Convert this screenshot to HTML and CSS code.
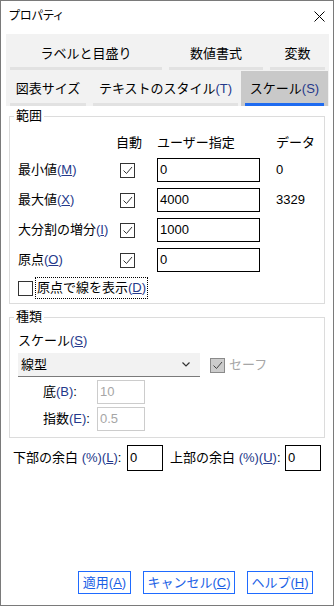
FILE: index.html
```html
<!DOCTYPE html>
<html lang="ja">
<head>
    <meta charset="UTF-8">
    <meta name="viewport" content="width=device-width, initial-scale=1.0">
    <title>プロパティ</title>
    <link rel="stylesheet" href="styles.css">
</head>
<body>

    <div class="window">
        <!-- タイトルバー -->
        <div class="titlebar">
            <span class="title">プロパティ</span>
            <svg class="close" width="11" height="11" viewBox="0 0 11 11">
                <path d="M0.5 0.5 L10.5 10.5 M10.5 0.5 L0.5 10.5" stroke="#000" stroke-width="1"/>
            </svg>
        </div>

        <!-- タブ -->
        <div class="tabs">
            <div class="tab-row row1">
                <div class="tab t-label"><span class="tab-text">ラベルと目盛り</span></div>
                <div class="tab t-num"><span class="tab-text">数値書式</span></div>
                <div class="tab t-var"><span class="tab-text">変数</span></div>
            </div>
            <div class="tab-row row2">
                <div class="tab t-size"><span class="tab-text">図表サイズ</span></div>
                <div class="tab t-style"><span class="tab-text">テキストのスタイル<span class="mn">(T)</span></span></div>
                <div class="tab t-scale active"><span class="tab-text">スケール<span class="mn">(S)</span></span></div>
            </div>
        </div>

        <div class="content">
            <fieldset class="group group-range">
                <legend>範囲</legend>
                <div class="range-grid">
                    <span></span>
                    <span class="head">自動</span>
                    <span class="head">ユーザー指定</span>
                    <span class="head data">データ</span>

                    <span class="row-label">最小値<span class="mn">(<u>M</u>)</span></span>
                    <span class="cb-cell"><span class="cb checked"><svg width="13" height="13" viewBox="0 0 13 13"><polyline points="2.5,6.5 5.5,9.5 11,3" fill="none" stroke="#333" stroke-width="1"/></svg></span></span>
                    <span class="field">0</span>
                    <span class="data">0</span>

                    <span class="row-label">最大値<span class="mn">(<u>X</u>)</span></span>
                    <span class="cb-cell"><span class="cb checked"><svg width="13" height="13" viewBox="0 0 13 13"><polyline points="2.5,6.5 5.5,9.5 11,3" fill="none" stroke="#333" stroke-width="1"/></svg></span></span>
                    <span class="field">4000</span>
                    <span class="data">3329</span>

                    <span class="row-label">大分割の増分<span class="mn">(<u>I</u>)</span></span>
                    <span class="cb-cell"><span class="cb checked"><svg width="13" height="13" viewBox="0 0 13 13"><polyline points="2.5,6.5 5.5,9.5 11,3" fill="none" stroke="#333" stroke-width="1"/></svg></span></span>
                    <span class="field">1000</span>
                    <span class="data"></span>

                    <span class="row-label">原点<span class="mn">(<u>O</u>)</span></span>
                    <span class="cb-cell"><span class="cb checked"><svg width="13" height="13" viewBox="0 0 13 13"><polyline points="2.5,6.5 5.5,9.5 11,3" fill="none" stroke="#333" stroke-width="1"/></svg></span></span>
                    <span class="field">0</span>
                    <span class="data"></span>
                </div>
                <div class="check-line">
                    <span class="cb"></span>
                    <span class="focus">原点で線を表示<span class="mn">(<u>D</u>)</span></span>
                </div>
            </fieldset>

            <fieldset class="group group-kind">
                <legend>種類</legend>
                <div class="scale-label">スケール<span class="mn">(<u>S</u>)</span></div>
                <div class="select-line">
                    <div class="select">
                        <span>線型</span>
                        <svg width="8" height="5" viewBox="0 0 8 5"><polyline points="0.5,0.5 4,4 7.5,0.5" fill="none" stroke="#333" stroke-width="1.2"/></svg>
                    </div>
                    <span class="cb disabled"><svg width="13" height="13" viewBox="0 0 13 13"><polyline points="2.5,6.5 5.5,9.5 11,3" fill="none" stroke="#444" stroke-width="1"/></svg></span>
                    <span class="safe-text">セーフ</span>
                </div>
                <div class="param-line">
                    <span class="param-label">底<span class="mn">(B)</span>:</span>
                    <span class="field small">10</span>
                </div>
                <div class="param-line">
                    <span class="param-label">指数<span class="mn">(E)</span>:</span>
                    <span class="field small">0.5</span>
                </div>
            </fieldset>

            <div class="margin-line">
                <span class="margin-label first">下部の余白 <span class="mn">(%)(<u>L</u>)</span>:</span>
                <span class="field tiny">0</span>
                <span class="margin-label second">上部の余白 <span class="mn">(%)(<u>U</u>)</span>:</span>
                <span class="field tiny">0</span>
            </div>

            <div class="buttons">
                <button class="btn b-apply">適用<span class="mn">(<u>A</u>)</span></button>
                <button class="btn b-cancel">キャンセル<span class="mn">(<u>C</u>)</span></button>
                <button class="btn b-help">ヘルプ<span class="mn">(<u>H</u>)</span></button>
            </div>
        </div>
    </div>

</body>
</html>
```

FILE: styles.css
```css
* {
    margin: 0;
    padding: 0;
    box-sizing: border-box;
}

body {
    font-family: "Liberation Sans", "Noto Sans CJK JP", sans-serif;
    font-size: 13px;
    line-height: 18px;
    color: #000;
    background-color: #fff;
}

.window {
    width: 334px;
    height: 606px;
    border: 1px solid #7a7a7a;
    display: flex;
    flex-direction: column;
}

/* タイトルバー */
.titlebar {
    height: 30px;
    display: flex;
    align-items: center;
    justify-content: space-between;
    padding: 0 8px 0 8px;
}

.title {
    font-size: 12px;
    font-feature-settings: "palt";
}

/* タブ */
.tabs {
    margin: 3px 4px 0 5px;
    background-color: #f2f2f2;
}

.tab-row {
    display: flex;
}

.row1 {
    height: 37px;
    padding: 0 3px 0 4px;
    gap: 7px;
}

.row2 {
    height: 35px;
    padding-left: 4px;
}

.tab {
    display: flex;
    flex-direction: column;
}

.tab::after {
    content: "";
    height: 3px;
    background-color: #e2e2e2;
}

.row1 .tab {
    margin-bottom: 1px;
}

.tab-text {
    flex: 1;
    display: flex;
    justify-content: center;
    align-items: center;
    white-space: nowrap;
}

.row1 .tab-text {
    padding-top: 7px;
}

.row2 .tab-text {
    padding-top: 4px;
}

.t-label { width: 152px; }
.t-num { width: 94px; }
.t-var { width: 55px; }
.t-size { width: 76px; margin-right: 7px; }
.t-style { width: 145px; margin-right: 3px; }
.t-scale { width: 87px; }

.tab.active {
    background-color: #c9c9c9;
}

.tab.active::after {
    background-color: #1f6bf0;
    margin: 0 4px;
}

.mn {
    color: #24388a;
}

/* 本体 */
.content {
    flex: 1;
    display: flex;
    flex-direction: column;
    padding: 0 8px 11px 8px;
}

.group {
    border: 1px solid #dcdcdc;
    padding: 0 8px 4px 8px;
}

.group legend {
    margin-left: -4px;
    padding: 0 2px;
    line-height: 18px;
}

.group-range {
    margin-top: 1px;
}

.range-grid {
    display: grid;
    grid-template-columns: 98px 41px 103px 1fr;
    grid-template-rows: 19px repeat(4, 24px);
    row-gap: 6px;
    align-items: center;
    margin-top: 8px;
}

.head {
    color: #000;
}

.data {
    padding-left: 16px;
}

.cb-cell {
    display: flex;
    padding-left: 4px;
}

.cb {
    width: 15px;
    height: 15px;
    border: 1px solid #333;
    background-color: #fff;
    display: inline-flex;
    align-items: center;
    justify-content: center;
}

.field {
    height: 24px;
    border: 1px solid #000;
    padding-left: 2px;
    display: flex;
    align-items: center;
    background-color: #fff;
}

.check-line {
    display: flex;
    align-items: center;
    height: 22px;
    margin-top: 5px;
}

.focus {
    margin-left: 2px;
    height: 22px;
    border: 1px dotted #000;
    padding: 0 1px;
    display: flex;
    align-items: center;
}

/* 種類 */
.group-kind {
    margin-top: 4px;
    padding-bottom: 6px;
}

.scale-label {
    margin-top: 6px;
}

.select-line {
    display: flex;
    align-items: center;
    margin-top: 3px;
}

.select {
    width: 182px;
    height: 24px;
    background-color: #f2f2f2;
    border-bottom: 1px solid #7a7a7a;
    display: flex;
    align-items: center;
    justify-content: space-between;
    padding: 0 10px 0 3px;
}

.cb.disabled {
    margin-left: 10px;
    background-color: #cccccc;
    border-color: #8a8a8a;
}

.safe-text {
    margin-left: 4px;
    color: #a6a6a6;
}

.param-line {
    display: flex;
    align-items: center;
    margin-top: 3px;
    padding-left: 25px;
}

.param-label {
    width: 54px;
}

.field.small {
    width: 48px;
    border-color: #cccccc;
    color: #a6a6a6;
}

/* 余白 */
.margin-line {
    display: flex;
    align-items: center;
    margin-top: 7px;
    padding-left: 4px;
}

.margin-label.first {
    width: 114px;
}

.margin-label.second {
    width: 115px;
    margin-left: 7px;
}

.field.tiny {
    width: 36px;
    height: 26px;
}

/* ボタン */
.buttons {
    margin-top: auto;
    display: flex;
    justify-content: flex-end;
    gap: 12px;
    padding-right: 12px;
}

.btn {
    height: 23px;
    border: 1px solid #1f6bff;
    background-color: #fff;
    color: #1a5fe6;
    font-family: "Liberation Sans", "Noto Sans CJK JP", sans-serif;
    font-size: 13px;
    line-height: 18px;
}

.btn .mn {
    color: #1a5fe6;
}

.b-apply { width: 53px; }
.b-cancel { width: 92px; }
.b-help { width: 66px; }
```
